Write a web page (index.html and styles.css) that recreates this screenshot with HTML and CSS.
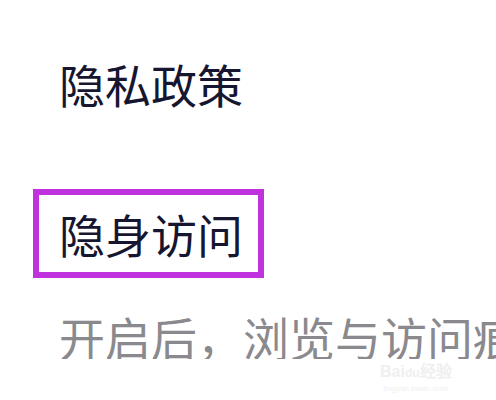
FILE: index.html
```html
<!DOCTYPE html>
<html lang="zh-CN">
<head>
  <meta charset="UTF-8" />
  <title>隐私设置</title>
  <link rel="stylesheet" href="styles.css">
</head>
<body>

  <div class="settings">
    <div class="item">隐私政策</div>

    <div class="item item-mark">
      <span class="mark-box">隐身访问</span>
    </div>

    <div class="desc">开启后，浏览与访问痕迹将不会被记录</div>
  </div>

  <!-- watermark -->
  <div class="watermark">
    <div class="wm-logo">Bai<span>du</span>经验</div>
    <div class="wm-url">jingyan.baidu.com</div>
  </div>

</body>
</html>
```

FILE: styles.css
```css
body {
  margin: 0;
  background: #fff;
  font-family: "Noto Sans CJK SC", "Noto Sans", sans-serif;
  overflow: hidden;
}

.settings {
  padding: 60px 0 0 59px;
  white-space: nowrap;
}

.item {
  font-size: 46px;
  line-height: 1;
  color: #161630;
}

.item-mark {
  margin: 83px 0 0 -26px;
}

.mark-box {
  display: inline-block;
  border: 6px solid #c032de;
  padding: 15px 15px 16px 20px;
}

.desc {
  margin-top: 35px;
  font-size: 46px;
  line-height: 1;
  color: #8a8a8e;
}

.watermark {
  position: absolute;
  left: 380px;
  top: 358px;
  color: #efefef;
  text-align: center;
}

.wm-logo {
  font-family: "Liberation Sans", sans-serif;
  font-size: 16px;
  font-weight: bold;
}

.wm-logo span {
  font-size: 12px;
}

.wm-url {
  font-family: "Liberation Sans", sans-serif;
  font-size: 8px;
  margin-top: 2px;
}
```
